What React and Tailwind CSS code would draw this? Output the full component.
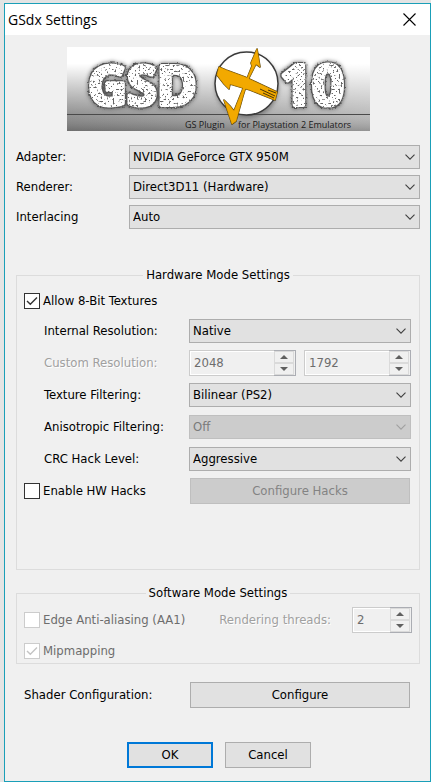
import { useState } from "react";
import clsx from "clsx";

const Banner = () => (
  <svg
    viewBox="0 0 303 84"
    className="block h-[84px] w-[303px]"
    role="img"
    aria-label="GSdx 10"
  >
    <defs>
      <linearGradient id="metal" x1="0" y1="0" x2="1" y2="0">
        <stop offset="0" stopColor="#868686" />
        <stop offset="1" stopColor="#b4b4b4" />
      </linearGradient>
      <linearGradient id="sky" x1="0" y1="0" x2="0" y2="1">
        <stop offset="0.25" stopColor="#fff" stopOpacity="1" />
        <stop offset="1" stopColor="#fff" stopOpacity="0.1" />
      </linearGradient>
      <linearGradient id="floor" x1="0" y1="0" x2="0" y2="1">
        <stop offset="0" stopColor="#fff" stopOpacity="0.1" />
        <stop offset="1" stopColor="#000" stopOpacity="0.18" />
      </linearGradient>
      <filter id="soft" x="-20%" y="-20%" width="140%" height="140%">
        <feGaussianBlur stdDeviation="2" />
      </filter>
      {/* chipped white stone: dark rough rim, specks inside, blurred shadow */}
      <filter
        id="stone"
        x="-15%"
        y="-15%"
        width="130%"
        height="130%"
        colorInterpolationFilters="sRGB"
      >
        <feTurbulence type="fractalNoise" baseFrequency="0.5" numOctaves="2" seed="4" result="noise" />
        <feDisplacementMap in="SourceGraphic" in2="noise" scale="2" xChannelSelector="R" yChannelSelector="G" result="body" />
        <feMorphology in="body" operator="dilate" radius="1" result="wide" />
        <feDisplacementMap in="wide" in2="noise" scale="4" xChannelSelector="G" yChannelSelector="B" result="rough" />
        <feFlood floodColor="#555555" />
        <feComposite in2="rough" operator="in" result="rim" />
        <feColorMatrix
          in="noise"
          type="matrix"
          values="0 0 0 0 0.4  0 0 0 0 0.4  0 0 0 0 0.4  0 8 0 0 -4.6"
          result="specks"
        />
        <feComposite in="specks" in2="body" operator="in" result="inner" />
        <feGaussianBlur in="rim" stdDeviation="2" result="shadow" />
        <feMerge>
          <feMergeNode in="shadow" />
          <feMergeNode in="rim" />
          <feMergeNode in="body" />
          <feMergeNode in="inner" />
        </feMerge>
      </filter>
    </defs>
    <rect width="303" height="84" fill="url(#metal)" />
    <rect width="303" height="67" fill="url(#sky)" />
    <rect y="68" width="303" height="16" fill="url(#floor)" />
    <rect y="67" width="303" height="1" fill="#4a4a4a" />

    <circle cx="180" cy="39" r="32" fill="#555" opacity="0.6" filter="url(#soft)" />
    <circle cx="179.5" cy="36.5" r="31.5" fill="#fff" stroke="#3a3a3a" strokeWidth="1.5" />

    <g
      fontFamily="'Open Sans', sans-serif"
      fontWeight="700"
      fill="#fff"
      stroke="#fff"
      strokeWidth="4"
      strokeLinejoin="round"
      filter="url(#stone)"
    >
      <text x="21" y="58" fontSize="54">GSD</text>
      <text x="213" y="58" fontSize="56">10</text>
    </g>

    <g stroke="#4a3608" strokeWidth="1.6" strokeLinejoin="round" fill="#4a3608">
      <path d="M190 2 L193 20 L189 17 L181 33 L176 49 L169 74 L165 77 L157 53 L163 59 L167 64 L177 39 L185 19 L184 16 Z" />
      <path d="M152 20 L159 23 L178 30 L210 45 L208 53 L183 43 L163 37 L162 42 L157 37 L150 28 Z" />
    </g>
    <g fill="#f2a900" stroke="#f2a900" strokeWidth="0.6">
      <path d="M190 2 L193 20 L189 17 L181 33 L176 49 L169 74 L165 77 L157 53 L163 59 L167 64 L177 39 L185 19 L184 16 Z" />
      <path d="M152 20 L159 23 L178 30 L210 45 L208 53 L183 43 L163 37 L162 42 L157 37 L150 28 Z" />
    </g>
    <path
      d="M193 42 L208 49 M196 46 L207 51 M201 43 L209 46"
      fill="none"
      stroke="#4a3608"
      strokeWidth="1"
    />

    <g fontFamily="'Open Sans', sans-serif" fontSize="9" fontWeight="500" fill="#1a1a1a">
      <text x="118" y="81">GS Plugin</text>
      <text x="171" y="81">for Playstation 2 Emulators</text>
    </g>
  </svg>
);

const Select = ({ id, options, disabled, className }) => (
  <div className={clsx("relative h-6", className)}>
    <select
      id={id}
      disabled={disabled}
      className="block h-6 w-full appearance-none border border-[#adadad] bg-[#e1e1e1] pl-[3px] pr-6 text-black opacity-100 outline-none disabled:border-[#bfbfbf] disabled:bg-[#cccccc] disabled:text-[#7a7a7a]"
    >
      {options.map((o) => (
        <option key={o}>{o}</option>
      ))}
    </select>
    <svg
      viewBox="0 0 10 6"
      className={clsx(
        "pointer-events-none absolute right-[5px] top-[9px] h-[6px] w-[10px]",
        disabled ? "text-[#a0a0a0]" : "text-[#404040]",
      )}
      fill="none"
      stroke="currentColor"
      strokeWidth="1.1"
    >
      <path d="M0.5 0.7 L5 5.2 L9.5 0.7" />
    </svg>
  </div>
);

const SpinButton = ({ label, up }) => (
  <button
    type="button"
    disabled
    aria-label={label}
    className="flex flex-1 items-center justify-center border border-[#dadada] bg-[#f0f0f0]"
  >
    <svg viewBox="0 0 8 4" className="h-1 w-2" fill="#606060">
      <path d={up ? "M0 4 L4 0 L8 4 Z" : "M0 0 L4 4 L8 0 Z"} />
    </svg>
  </button>
);

const SpinBox = ({ id, label, value, className }) => (
  <div className={clsx("flex h-[26px]", className)}>
    <div className="min-w-0 flex-1 border border-r-0 border-[#cccccc] bg-white py-px pl-px">
      <input
        id={id}
        type="text"
        aria-label={label}
        defaultValue={value}
        disabled
        className="block h-full w-full bg-[#f0f0f0] pb-px pl-[3px] text-[#6d6d6d]"
      />
    </div>
    <div className="flex w-[22px] flex-col border border-l-0 border-[#abadb3] bg-[#f0f0f0] pr-px">
      <SpinButton label={`Increase ${label}`} up />
      <SpinButton label={`Decrease ${label}`} />
    </div>
  </div>
);

const Checkbox = ({ label, checked, onChange, disabled }) => (
  <label
    className={clsx(
      "flex items-center gap-[3px] whitespace-nowrap",
      disabled && "text-[#6d6d6d]",
    )}
  >
    <span className="relative block h-4 w-4">
      <input
        type="checkbox"
        checked={checked}
        onChange={onChange}
        disabled={disabled}
        className="block h-4 w-4 appearance-none border border-[#333333] bg-white disabled:border-[#cccccc]"
      />
      {checked && (
        <svg
          viewBox="0 0 16 16"
          className={clsx(
            "pointer-events-none absolute inset-0",
            disabled ? "text-[#c4c4c4]" : "text-[#333333]",
          )}
          fill="none"
          stroke="currentColor"
          strokeWidth="1.4"
        >
          <path d="M3 8 L6.3 11.3 L13 4.5" />
        </svg>
      )}
    </span>
    {label}
  </label>
);

const Button = ({ className, ...props }) => (
  <button
    type="button"
    className={clsx(
      "h-[26px] bg-[#e1e1e1] text-center disabled:border-[#bfbfbf] disabled:bg-[#cccccc] disabled:text-[#838383]",
      className,
    )}
    {...props}
  />
);

const Group = ({ title, className, children }) => (
  <fieldset className={clsx("border border-[#dcdcdc] px-[7px]", className)}>
    <legend className="mx-auto h-4 px-[3px] leading-4">{title}</legend>
    {children}
  </fieldset>
);

const Row = ({ id, label, disabled, children }) => (
  <div className="flex h-8 items-center pl-5 pr-px">
    <label
      htmlFor={id}
      className={clsx(
        "w-[145px] shrink-0 whitespace-nowrap",
        disabled && "text-[#a0a0a0] [text-shadow:1px_1px_0_#ffffff]",
      )}
    >
      {label}
    </label>
    {children}
  </div>
);

const devices = [
  { id: "adapter", label: "Adapter:", options: ["NVIDIA GeForce GTX 950M"] },
  { id: "renderer", label: "Renderer:", options: ["Direct3D11 (Hardware)"] },
  { id: "interlacing", label: "Interlacing", options: ["Auto"] },
];

const App = () => {
  const [allow8Bit, setAllow8Bit] = useState(true);
  const [hwHacks, setHwHacks] = useState(false);

  return (
    <div className="min-h-screen bg-[#e4e4e4] pl-1 pt-[3px] font-['DejaVu_Sans_Condensed','DejaVu_Sans',sans-serif] text-[13px] leading-4 text-black">
      <div className="border border-[#1a9fb8] bg-[#f0f0f0]">
        <header className="flex h-[31px] items-center justify-between bg-white pl-[3px] pr-[14px]">
          <h1 className="font-['Open_Sans',sans-serif] text-[14px] leading-5">
            GSdx Settings
          </h1>
          <button type="button" aria-label="Close">
            <svg
              viewBox="0 0 13 13"
              className="h-[13px] w-[13px]"
              stroke="#000"
              strokeWidth="1.1"
            >
              <path d="M0.5 0.5 L12.5 12.5 M12.5 0.5 L0.5 12.5" />
            </svg>
          </button>
        </header>

        <main className="pb-[13px] pl-[11px] pr-[10px] pt-3">
          <div className="flex justify-center">
            <Banner />
          </div>

          <div className="mt-[14px] flex flex-col gap-[6px]">
            {devices.map((d) => (
              <div key={d.id} className="flex items-center">
                <label htmlFor={d.id} className="w-[113px] shrink-0">
                  {d.label}
                </label>
                <Select id={d.id} options={d.options} className="flex-1" />
              </div>
            ))}
          </div>

          <Group title="Hardware Mode Settings" className="mt-[38px] pb-[62px]">
            <div className="mt-1 flex h-7 items-center">
              <Checkbox
                label="Allow 8-Bit Textures"
                checked={allow8Bit}
                onChange={(e) => setAllow8Bit(e.target.checked)}
              />
            </div>
            <Row id="resolution" label="Internal Resolution:">
              <Select id="resolution" options={["Native"]} className="flex-1" />
            </Row>
            <Row id="custom-x" label="Custom Resolution:" disabled>
              <div className="flex flex-1 gap-2">
                <SpinBox id="custom-x" label="width" value="2048" className="flex-1" />
                <SpinBox id="custom-y" label="height" value="1792" className="flex-1" />
              </div>
            </Row>
            <Row id="filtering" label="Texture Filtering:">
              <Select id="filtering" options={["Bilinear (PS2)"]} className="flex-1" />
            </Row>
            <Row id="anisotropic" label="Anisotropic Filtering:">
              <Select id="anisotropic" options={["Off"]} disabled className="flex-1" />
            </Row>
            <Row id="crc" label="CRC Hack Level:">
              <Select id="crc" options={["Aggressive"]} className="flex-1" />
            </Row>
            <div className="flex h-8 items-center pr-[2px]">
              <div className="w-[166px] shrink-0">
                <Checkbox
                  label="Enable HW Hacks"
                  checked={hwHacks}
                  onChange={(e) => setHwHacks(e.target.checked)}
                />
              </div>
              <Button className="flex-1 border border-[#adadad]" disabled={!hwHacks}>
                Configure Hacks
              </Button>
            </div>
          </Group>

          <Group title="Software Mode Settings" className="mt-[15px] pb-1">
            <div className="mt-[6px] flex items-center">
              <Checkbox label="Edge Anti-aliasing (AA1)" checked={false} disabled />
              <label
                htmlFor="threads"
                className="ml-auto mr-[21px] whitespace-nowrap text-[#a0a0a0] [text-shadow:1px_1px_0_#ffffff]"
              >
                Rendering threads:
              </label>
              <SpinBox id="threads" label="threads" value="2" className="w-[60px]" />
            </div>
            <div className="mt-[10px] flex">
              <Checkbox label="Mipmapping" checked disabled />
            </div>
          </Group>

          <div className="mt-[18px] flex items-center pl-2 pr-[10px]">
            <span className="w-[166px] shrink-0">Shader Configuration:</span>
            <Button className="flex-1 border border-[#adadad]">Configure</Button>
          </div>

          <div className="mt-[34px] flex justify-center gap-3 pl-[2px]">
            <Button className="w-[86px] border-2 border-[#0078d7]">OK</Button>
            <Button className="w-[86px] border border-[#adadad]">Cancel</Button>
          </div>
        </main>
      </div>
    </div>
  );
};

export default App;
